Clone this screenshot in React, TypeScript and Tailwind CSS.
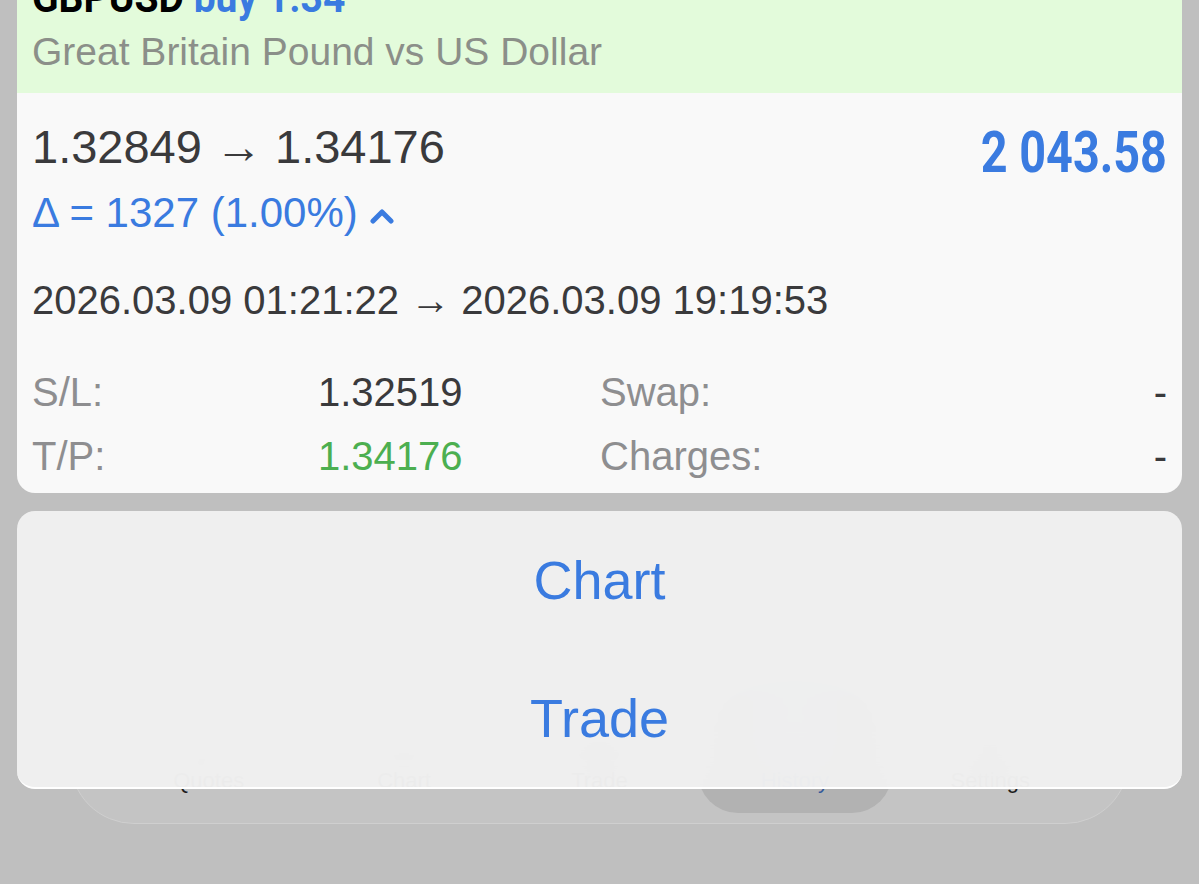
import { useState } from "react";

// position details row: label / value / label / value
function DetailRow({ label, value, valueClass, label2, value2 }: { label: string; value: string; valueClass: string; label2: string; value2: string }) {
  return (
    <div className="flex items-center h-[64px]">
      <span className="w-[286px] text-[#8e8e90]">{label}</span>
      <span className={`w-[282px] ${valueClass}`}>{value}</span>
      <span className="flex-1 text-[#8e8e90]">{label2}</span>
      <span className="text-[#3a3a3c]">{value2}</span>
    </div>
  );
}

function TabIcon({ kind }: { kind: string }) {
  // rough glyphs, they only show blurred through the sheet
  if (kind === "quotes")
    return (
      <svg width="44" height="60" viewBox="0 0 44 60" fill="none" stroke="#9a9a9a" strokeWidth="6" strokeLinecap="round">
        <path d="M30 6 L14 54" />
      </svg>
    );
  if (kind === "chart")
    return (
      <svg width="44" height="60" viewBox="0 0 44 60" fill="#a0a0a0">
        <rect x="12" y="8" width="20" height="44" rx="4" />
      </svg>
    );
  if (kind === "trade")
    return (
      <svg width="60" height="60" viewBox="0 0 60 60" fill="#a6a6a6">
        <rect x="10" y="14" width="40" height="38" rx="6" />
      </svg>
    );
  if (kind === "history")
    return (
      <svg width="50" height="70" viewBox="0 0 50 70" fill="#9cc3f5">
        <rect x="14" y="4" width="22" height="62" rx="10" />
      </svg>
    );
  return (
    <svg width="50" height="60" viewBox="0 0 50 60" fill="#a0a0a0">
      <circle cx="25" cy="24" r="16" />
      <rect x="18" y="30" width="14" height="26" rx="7" />
    </svg>
  );
}

const condensed = { fontFamily: 'Roboto, "Liberation Sans", sans-serif' };

export default function App() {
  const [picked, setPicked] = useState<string | null>(null);
  const tabs = [
    { key: "quotes", label: "Quotes" },
    { key: "chart", label: "Chart" },
    { key: "trade", label: "Trade" },
    { key: "history", label: "History" },
    { key: "settings", label: "Settings" },
  ];

  return (
    <div className="relative w-full h-[884px] overflow-hidden bg-[#bfbfbf]" style={{ fontFamily: '"Liberation Sans", Arial, sans-serif' }}>
      {/* tab bar, under the dimmed overlay */}
      <div className="absolute left-[70px] right-[70px] top-[664px] h-[160px] rounded-[64px] bg-[#c4c4c4] border border-[#cfcfcf] flex items-end justify-around px-[40px] pb-[29px]">
        {tabs.map((t) => (
          <div key={t.key} className="relative flex flex-col items-center w-[190px]">
            {t.key === "history" && <div className="absolute -left-[2px] -right-[2px] -top-[24px] -bottom-[19px] rounded-[40px] bg-[#b2b2b2]" />}
            <div className="relative">
              <TabIcon kind={t.key} />
            </div>
            <span className={`relative text-[22px] leading-[26px] ${t.key === "history" ? "text-[#34589a]" : "text-[#1e1e1e]"}`}>{t.label}</span>
          </div>
        ))}
      </div>

      <div className="relative flex flex-col px-[17px]">
        {/* position card */}
        <div className="-mt-[45px] rounded-b-[18px] overflow-hidden bg-[#f9f9f9]">
          <div className="bg-[#e3fbdb] px-[15px] pt-[19px] pb-[18px]">
            <div className="text-[42px] leading-[48px] font-bold whitespace-nowrap origin-left scale-x-[0.93]" style={condensed}>
              <span className="text-black">GBPUSD</span> <span className="text-[#3a7be0]">buy 1.34</span>
            </div>
            <div className="mt-[7px] text-[39px] leading-[46px] text-[#8b8f89]">Great Britain Pound vs US Dollar</div>
          </div>

          <div className="px-[15px] pt-[26px] pb-[5px]">
            <div className="flex items-start justify-between">
              <div className="text-[47px] leading-[56px] text-[#3a3a3c]">1.32849 → 1.34176</div>
              <div className="mt-[4px] text-[57px] leading-[60px] font-bold text-[#3a7be0] whitespace-nowrap origin-right scale-x-[0.82]" style={condensed}>
                2 043.58
              </div>
            </div>
            <div className="mt-[4px] flex items-center gap-[12px] text-[42px] leading-[52px] text-[#3a7be0]">
              <span>Δ = 1327 (1.00%)</span>
              <svg width="24" height="16" viewBox="0 0 24 16" fill="none" stroke="#3a7be0" strokeWidth="5" strokeLinecap="round" strokeLinejoin="round" className="mt-[6px]">
                <path d="M3 13 L12 4 L21 13" />
              </svg>
            </div>
            <div className="mt-[37px] text-[40px] leading-[48px] text-[#3a3a3c]">2026.03.09 01:21:22 → 2026.03.09 19:19:53</div>
            <div className="mt-[36px] text-[40px]">
              <DetailRow label="S/L:" value="1.32519" valueClass="text-[#3a3a3c]" label2="Swap:" value2="-" />
              <DetailRow label="T/P:" value="1.34176" valueClass="text-[#4caf50]" label2="Charges:" value2="-" />
            </div>
          </div>
        </div>

        {/* action sheet */}
        <div className="mt-[18px] h-[278px] rounded-[18px] bg-[#f1f1f1]/95 backdrop-blur-xl border-b-2 border-white flex flex-col">
          {["Chart", "Trade"].map((a) => (
            <button
              key={a}
              onClick={() => setPicked(a)}
              className={`flex-1 flex items-center justify-center text-[54px] ${picked === a ? "text-[#2c62b8]" : "text-[#3a7be0]"}`}
            >
              {a}
            </button>
          ))}
        </div>
      </div>
    </div>
  );
}
